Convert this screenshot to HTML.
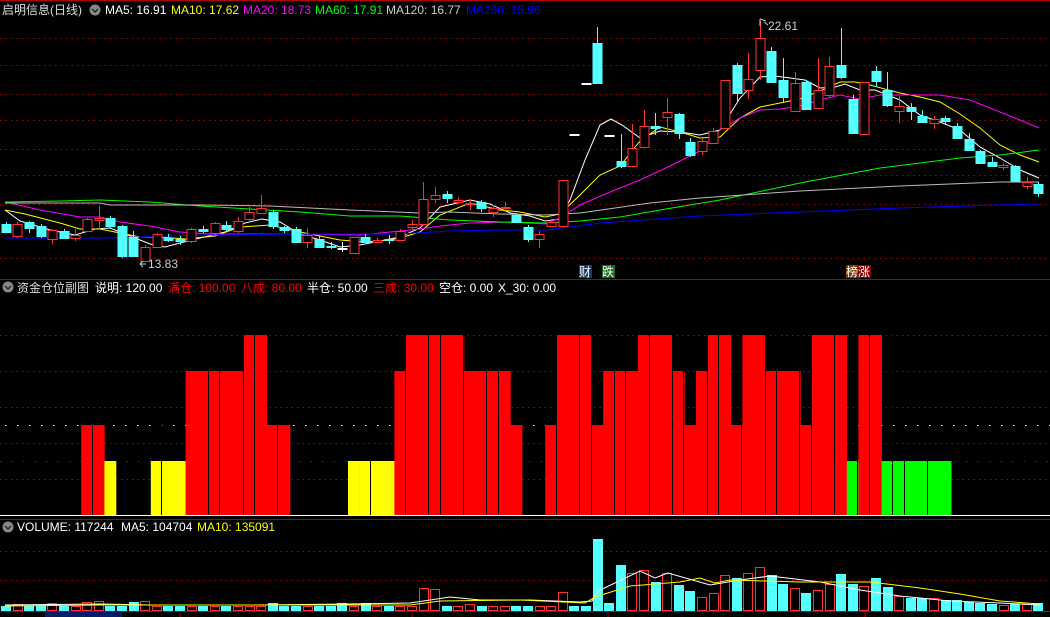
<!DOCTYPE html>
<html><head><meta charset="utf-8">
<style>
html,body{margin:0;padding:0;background:#000;width:1050px;height:617px;overflow:hidden}
svg{display:block}
text{font-family:"Liberation Sans","Noto Sans CJK SC",sans-serif;font-size:12px}
</style></head><body>
<svg id="s" width="1050" height="617" viewBox="0 0 1050 617" xmlns="http://www.w3.org/2000/svg">
<rect width="1050" height="617" fill="#000"/>
<g id="grid"></g>
<g id="ma"></g>
<g id="cd"></g>
<g id="bars"></g>
<g id="vol"></g>
<!-- dividers -->
<line x1="0" y1="279.5" x2="1050" y2="279.5" stroke="#b00000"/>
<line x1="0" y1="519.5" x2="1050" y2="519.5" stroke="#b00000"/>
<line x1="0" y1="611.5" x2="1050" y2="611.5" stroke="#b00000"/>
<line x1="0" y1="0.5" x2="1050" y2="0.5" stroke="#b00000"/>
<!-- header top -->
<text x="2" y="14" fill="#ddd">启明信息(日线)</text>
<circle cx="95" cy="10" r="5.5" fill="#888"/><path d="M92 9l3 3 3-3" stroke="#222" stroke-width="1.4" fill="none"/>
<text x="105" y="14" fill="#fff">MA5: 16.91</text>
<text x="171" y="14" fill="#ff0">MA10: 17.62</text>
<text x="243" y="14" fill="#f0f">MA20: 18.73</text>
<text x="315" y="14" fill="#0f0">MA60: 17.91</text>
<text x="386" y="14" fill="#ccc">MA120: 16.77</text>
<text x="466" y="14" fill="#0000ff">MA250: 15.96</text>
<text x="768" y="30" fill="#ccc">22.61</text>
<path d="M760 26 L760 19 M760 19 L766 21 M764 22 L768 25" stroke="#ccc" fill="none"/>
<text x="148" y="268" fill="#ccc">13.83</text>
<path d="M146 264 L140 264 M140 264 L143 261 M140 264 L143 267" stroke="#ccc" fill="none"/>
<rect x="579" y="265" width="13" height="13" fill="#1a3a6a"/><text x="579" y="276" fill="#fff">财</text>
<rect x="602" y="265" width="13" height="13" fill="#1a6a1a"/><text x="602" y="276" fill="#fff">跌</text>
<rect x="846" y="265" width="12" height="13" fill="#7a3a00"/><text x="846" y="276" fill="#fff">榜</text>
<rect x="858" y="265" width="13" height="13" fill="#8a0000"/><text x="858" y="276" fill="#fff">涨</text>
<!-- header mid -->
<circle cx="8" cy="287" r="5.5" fill="#888"/><path d="M5 286l3 3 3-3" stroke="#222" stroke-width="1.4" fill="none"/>
<text x="17" y="292" fill="#ddd">资金仓位副图</text>
<text x="95" y="292" fill="#fff">说明: 120.00</text>
<text x="168" y="292" fill="#f00">满仓: 100.00</text>
<text x="241" y="292" fill="#f00">八成: 80.00</text>
<text x="307" y="292" fill="#fff">半仓: 50.00</text>
<text x="373" y="292" fill="#f00">三成: 30.00</text>
<text x="439" y="292" fill="#fff">空仓: 0.00</text>
<text x="498" y="292" fill="#fff">X_30: 0.00</text>
<!-- header vol -->
<circle cx="8" cy="527" r="5.5" fill="#888"/><path d="M5 526l3 3 3-3" stroke="#222" stroke-width="1.4" fill="none"/>
<text x="17" y="531" fill="#fff">VOLUME: 117244</text>
<text x="121" y="531" fill="#fff">MA5: 104704</text>
<text x="197" y="531" fill="#ff0">MA10: 135091</text>
<!-- axis -->
<rect x="45" y="612" width="77" height="5" fill="#0a1a6a"/>
<line x1="180" y1="611" x2="180" y2="617" stroke="#b00000"/>
<line x1="412" y1="611" x2="412" y2="617" stroke="#b00000"/>
<line x1="608" y1="611" x2="608" y2="617" stroke="#b00000"/>
<line x1="865" y1="611" x2="865" y2="617" stroke="#b00000"/>
</svg>
<script>
var NS="http://www.w3.org/2000/svg";
function el(p,t,a){var e=document.createElementNS(NS,t);for(var k in a)e.setAttribute(k,a[k]);document.getElementById(p).appendChild(e);return e;}
var s=11.6;
// grid
[38,65,94,120,149,175,204,258].forEach(function(y){el("grid","line",{x1:0,y1:y+.5,x2:1050,y2:y+.5,stroke:"#b00000","stroke-dasharray":"1.5,4"});});
[335,371,407,443,479].forEach(function(y){el("grid","line",{x1:0,y1:y+.5,x2:1050,y2:y+.5,stroke:"#b00000","stroke-dasharray":"1.5,4"});});
el("grid","line",{x1:0,y1:461.5,x2:1050,y2:461.5,stroke:"#b00000","stroke-dasharray":"1.5,10"});
el("grid","line",{x1:5,y1:425.5,x2:1050,y2:425.5,stroke:"#fff","stroke-dasharray":"1.5,10.5"});
[551,580].forEach(function(y){el("grid","line",{x1:0,y1:y+.5,x2:1050,y2:y+.5,stroke:"#b00000","stroke-dasharray":"1.5,4"});});
el("grid","line",{x1:0,y1:515.5,x2:1050,y2:515.5,stroke:"#fff"});
// MAs
function pl(pts,c){el("ma","polyline",{points:pts.map(function(p){return p.join(",")}).join(" "),fill:"none",stroke:c,"stroke-width":1});}
pl([[5,210],[20,221],[50,230],[75,235],[95,229],[110,228],[130,236],[150,244],[165,247],[180,243],[200,238],[225,232],[245,223],[262,219],[280,222],[300,234],[320,240],[340,247],[360,245],[380,241],[400,237],[420,228],[440,207],[470,200],[490,204],[510,213],[530,216],[545,221],[560,219],[570,200],[585,160],[600,125],[611,119],[622,125],[640,138],[660,131],[680,132],[700,135],[720,130],[740,98],[760,77],[775,76],[790,78],[805,80],[820,88],[835,87],[845,84],[860,90],[875,90],[900,100],[920,115],[940,122],[960,130],[980,147],[1000,158],[1020,170],[1039,178]],"#fff");
pl([[5,210],[25,214],[60,223],[80,229],[100,229],[120,233],[140,237],[160,237],[185,239],[215,236],[240,227],[270,225],[300,232],[320,236],[340,240],[365,242],[380,241],[400,238],[420,232],[440,215],[470,203],[500,210],[520,212],[545,217],[560,214],[580,195],[600,175],[620,166],[640,141],[660,127],[680,132],[700,138],[720,137],[740,118],[760,107],[780,103],[800,99],[820,91],[840,82],[855,82],[870,85],[900,93],[920,97],[940,102],[960,114],[980,128],[1000,145],[1020,155],[1039,162]],"#ff0");
pl([[10,203],[40,210],[80,217],[100,217],[120,222],[150,226],[180,232],[210,234],[240,234],[300,234],[360,235],[380,233],[400,231],[420,229],[440,226],[470,223],[510,222],[545,224],[560,218],[580,205],[610,192],[640,180],[670,166],[700,151],[720,130],[740,118],[760,110],[780,109],[800,106],[820,100],[840,95],[860,99],[880,95],[940,95],[970,100],[1000,112],[1020,120],[1039,128]],"#f0f");
pl([[5,202],[60,201],[100,200],[150,202],[200,206],[250,209],[300,212],[350,216],[400,216],[450,220],[500,222],[545,223],[580,221],[620,217],[660,210],[720,200],[800,183],[880,168],[960,158],[1000,155],[1039,150]],"#0f0");
pl([[5,203],[100,203],[110,205],[200,205],[270,206],[350,210],[420,213],[450,212],[500,214],[545,215],[580,213],[650,203],[700,198],[800,191],[900,186],[1000,182],[1039,182]],"#bbb");
pl([[5,238],[110,238],[200,235],[300,234],[400,234],[450,231],[500,230],[545,230],[600,223],[700,216],[800,212],[900,208],[1000,205],[1039,204]],"#0000ff");
// candles [i,t,top,bot,hi,lo]
var C=[[0,'c',224,232,222,233],[1,'r',224,236,222,238],[2,'c',222,228,221,233],[3,'c',226,236,224,238],[4,'r',230,239,229,244],[5,'c',231,238,229,239],[6,'r',235,238,229,241],[7,'r',219,231,218,232],[8,'r',218,220,206,229],[9,'c',218,226,216,228],[10,'c',226,256,225,258],[11,'c',237,256,231,257],[12,'r',247,261,245,262],[13,'r',234,247,233,248],[14,'c',238,240,234,242],[15,'c',239,241,236,245],[16,'r',229,241,228,243],[17,'c',229,231,226,233],[18,'r',223,233,222,235],[19,'c',225,229,221,231],[20,'r',221,231,217,233],[21,'r',212,219,207,223],[22,'r',208,213,195,214],[23,'c',212,226,210,229],[24,'c',227,230,226,233],[25,'c',229,242,227,242],[26,'r',235,242,228,248],[27,'c',239,247,236,248],[28,'c',246,247,242,249],[29,'w',248,249,242,252],[30,'r',237,253,237,253],[31,'c',237,242,234,243],[32,'r',240,242,238,243],[33,'c',239,240,235,244],[34,'r',231,240,229,241],[35,'r',224,227,220,230],[36,'r',199,224,182,225],[37,'r',195,199,187,203],[38,'c',194,198,191,203],[39,'r',200,202,197,204],[40,'r',203,204,199,210],[41,'c',202,208,200,212],[42,'r',208,212,205,217],[43,'r',207,208,202,212],[44,'c',215,222,213,223],[45,'c',227,239,225,242],[46,'r',234,239,231,248],[47,'r',222,226,219,227],[48,'r',180,226,180,227],[49,'w',134,135,134,135],[50,'w',83,84,83,84],[51,'c',43,83,27,84],[52,'w',135,136,135,136],[53,'c',161,166,134,168],[54,'r',148,166,124,166],[55,'r',126,147,110,147],[56,'c',126,128,113,135],[57,'r',112,117,98,135],[58,'c',114,133,113,139],[59,'c',142,155,138,157],[60,'r',141,151,139,155],[61,'r',131,143,128,144],[62,'r',80,128,80,128],[63,'c',65,93,63,101],[64,'r',79,90,53,99],[65,'r',38,70,21,80],[66,'c',51,82,47,83],[67,'c',80,97,58,103],[68,'r',83,111,72,112],[69,'c',82,109,80,110],[70,'r',90,108,58,109],[71,'r',66,95,57,97],[72,'c',65,77,28,79],[73,'c',99,133,95,134],[74,'r',82,134,82,134],[75,'c',71,81,66,87],[76,'c',90,105,72,107],[77,'r',106,111,96,123],[78,'c',107,111,103,120],[79,'c',116,122,110,123],[80,'r',119,123,116,129],[81,'c',118,121,116,125],[82,'c',126,138,123,139],[83,'c',139,150,133,151],[84,'c',151,163,150,164],[85,'c',162,166,157,167],[86,'r',165,167,163,170],[87,'c',166,181,165,182],[88,'r',182,186,177,189],[89,'c',184,193,182,197]];
C.forEach(function(d){var cx=Math.round(d[0]*s+5.8)+.5,x=cx-4.5,col=d[1]=='r'?'#ff3232':d[1]=='c'?'#54ffff':'#fff';
 el("cd","line",{x1:cx,y1:d[4],x2:cx,y2:d[5],stroke:col});
 var h=Math.max(1,d[3]-d[2]);
 if(d[1]=='r')el("cd","rect",{x:x,y:d[2]+.5,width:9,height:h,fill:"#000",stroke:col});
 else el("cd","rect",{x:x-.5,y:d[2],width:10,height:h+1,fill:col});
});
// position bars
var L={100:335,80:371,50:425,30:461};
var B={7:50,8:50,9:-30,13:-30,14:-30,15:-30,16:80,17:80,18:80,19:80,20:80,21:100,22:100,23:50,24:50,30:-30,31:-30,32:-30,33:-30,34:80,35:100,36:100,37:100,38:100,39:100,40:80,41:80,42:80,43:80,44:50,47:50,48:100,49:100,50:100,51:50,52:80,53:80,54:80,55:100,56:100,57:100,58:80,59:50,60:80,61:100,62:100,63:50,64:100,65:100,66:80,67:80,68:80,69:50,70:100,71:100,72:100,73:-31,74:100,75:100,76:-31,77:-31,78:-31,79:-31,80:-31,81:-31};
for(var k in B){var v=B[k],i=+k,col='#ff0000',lv=v;if(v==-30){col='#ffff00';lv=30}if(v==-31){col='#00ff00';lv=30}
 el("bars","rect",{x:i*s,y:L[lv],width:s+.3,height:515-L[lv],fill:col});}
[8,14,18,19,21,22,24,32,35,37,38,40,42,43,48,50,51,53,54,56,58,59,61,62,64,66,67,69,70,72,74,75,77,78,80].forEach(function(k){el("bars","rect",{x:Math.round(k*s)-1,y:330,width:1,height:185,fill:"#000"});});
// volume
var V=[];for(var i=0;i<90;i++)V.push(606);
var VS={1:604,4:603,7:602,8:601,11:602,12:601,23:603,29:603,31:603,36:588,37:589,40:604,48:592,51:539,52:603,53:565,54:573,55:570,56:582,57:573,58:585,59:591,60:597,61:593,62:575,63:578,64:573,65:567,66:575,67:584,68:588,69:593,70:590,71:584,72:574,73:584,74:586,75:578,76:587,77:596,78:598,79:598,80:598,81:600,82:600,83:602,84:603,85:604,86:605,87:604,88:604,89:603};
for(var k in VS)V[+k]=VS[k];
C.forEach(function(d){var x=Math.round(d[0]*s+1)+.5,t=V[d[0]];
 if(d[1]=='r')el("vol","rect",{x:x,y:t+.5,width:9,height:610-t,fill:"none",stroke:"#ff3232"});
 else el("vol","rect",{x:x-.5,y:t,width:10,height:611-t,fill:"#54ffff"});});
function vl(pts,c){el("vol","polyline",{points:pts.map(function(p){return p.join(",")}).join(" "),fill:"none",stroke:c});}
vl([[5,605],[100,604],[150,605],[250,605],[350,604],[410,603],[450,597],[480,600],[530,600],[580,602],[592,601],[598,591],[640,571],[655,578],[668,573],[710,585],[740,580],[770,576],[820,582],[860,590],[900,596],[950,601],[1000,603],[1040,605]],"#fff");
vl([[5,606],[100,605],[200,605],[300,605],[410,605],[440,601],[520,600],[585,603],[595,597],[630,586],[680,582],[700,578],[715,583],[730,580],[800,582],[870,582],[920,588],[960,594],[1000,601],[1040,604]],"#ff0");
</script>
</body></html>
